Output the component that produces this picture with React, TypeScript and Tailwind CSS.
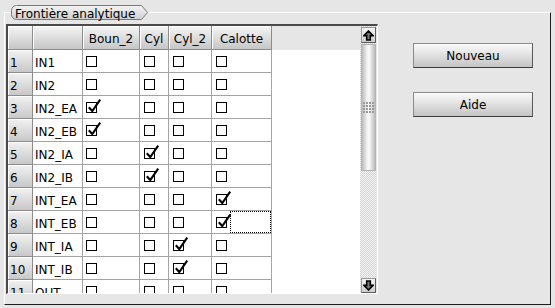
import React from "react";

type Row = [number, string, number, number, number, number];

const rows: Row[] = [
  [1, "IN1", 0, 0, 0, 0],
  [2, "IN2", 0, 0, 0, 0],
  [3, "IN2_EA", 1, 0, 0, 0],
  [4, "IN2_EB", 1, 0, 0, 0],
  [5, "IN2_IA", 0, 1, 0, 0],
  [6, "IN2_IB", 0, 1, 0, 0],
  [7, "INT_EA", 0, 0, 0, 1],
  [8, "INT_EB", 0, 0, 0, 1],
  [9, "INT_IA", 0, 0, 1, 0],
  [10, "INT_IB", 0, 0, 1, 0],
  [11, "OUT", 0, 0, 0, 0],
];

const colW = ["w-[57px]", "w-[29px]", "w-[43px]", "w-[60px]"];
const headers = ["Boun_2", "Cyl", "Cyl_2", "Calotte"];

function Check({ on }: { on: boolean }) {
  return (
    <span className="relative block w-[11px] h-[11px] border border-black bg-white">
      {on && (
        <svg
          className="absolute left-[-1px] top-[-5px] overflow-visible"
          width="17"
          height="17"
          viewBox="0 0 17 17"
        >
          <path d="M2.8 9.2 L6.3 13 L14.2 1.6" fill="none" stroke="#000" strokeWidth="2.1" />
        </svg>
      )}
    </span>
  );
}

function Arrow({ down }: { down?: boolean }) {
  return (
    <svg width="11" height="11" viewBox="0 0 11 11" className={down ? "rotate-180" : ""}>
      <path d="M5.5 1 L10 5.6 L7.3 5.6 L7.3 10 L3.7 10 L3.7 5.6 L1 5.6 Z" fill="#7a7a7a" stroke="#000" strokeWidth="1.6" strokeLinejoin="miter" />
    </svg>
  );
}

export default function App() {
  return (
    <div className="relative w-[555px] h-[308px] overflow-hidden bg-[#e6e6e6] font-['DejaVu_Sans',sans-serif] text-[12px] leading-[14px] text-black">
      {/* group legend */}
      <div className="absolute left-[11px] top-[5px] w-[138px] h-[16px]">
        <svg className="absolute inset-0" width="138" height="16" viewBox="0 0 138 16">
          <defs>
            <linearGradient id="lg" x1="0" y1="0" x2="0" y2="1">
              <stop offset="0" stopColor="#f4f4f4" />
              <stop offset="1" stopColor="#cfcfcf" />
            </linearGradient>
          </defs>
          <path
            d="M5.5 0.5 H130.5 L136.5 7.5 L130.5 14.5 H5.5 A5 5 0 0 1 0.5 9.5 V5.5 A5 5 0 0 1 5.5 0.5 Z"
            fill="url(#lg)"
            stroke="#7a7a7a"
            strokeWidth="1"
          />
        </svg>
        <span className="absolute left-[4px] top-[2px] whitespace-nowrap">Frontière analytique</span>
      </div>

      {/* group box */}
      <div className="ml-[4px] mt-[12px] w-[547px] h-[293px] border-t border-l border-white border-r border-b border-r-[#1e1e1e] border-b-[#1e1e1e] flex">
        {/* table frame */}
        <div className="ml-[1px] mt-[11px] w-[372px] h-[270px] border-t-2 border-l-2 border-t-[#4a4a4a] border-l-[#4a4a4a] border-r border-b border-r-white border-b-white flex">
          {/* viewport */}
          <div className="w-[352px] h-[267px] overflow-hidden bg-white">
            {/* header */}
            <div className="flex h-[24px] bg-[#e6e6e6]">
              <div className="w-[25px] h-[24px] border-r border-b border-[#8c8c8c] bg-linear-to-b from-[#f6f6f6] to-[#c6c6c6] shadow-[inset_1px_1px_0_#ffffff]" />
              <div className="w-[50px] h-[24px] border-r border-b border-[#8c8c8c] bg-linear-to-b from-[#f6f6f6] to-[#c6c6c6] shadow-[inset_1px_1px_0_#ffffff]" />
              {headers.map((h, i) => (
                <div
                  key={h}
                  className={`${colW[i]} h-[24px] border-r border-b border-[#8c8c8c] bg-linear-to-b from-[#f6f6f6] to-[#c6c6c6] shadow-[inset_1px_1px_0_#ffffff] flex items-center justify-center pt-[3px]`}
                >
                  {h}
                </div>
              ))}
            </div>
            {/* rows */}
            {rows.map((r) => (
              <div key={r[0]} className="flex h-[23px]">
                <div className="w-[25px] h-[23px] border-r border-b border-[#8c8c8c] bg-linear-to-b from-[#f2f2f2] to-[#c8c8c8] shadow-[inset_1px_1px_0_#ffffff] flex items-center pl-[2px] pt-[3px]">
                  {r[0]}
                </div>
                <div className="w-[50px] h-[23px] border-r border-b border-[#a4a4a4] flex items-center pl-[2px] pt-[3px] whitespace-nowrap">
                  {r[1]}
                </div>
                {[r[2], r[3], r[4], r[5]].map((v, i) => (
                  <div
                    key={i}
                    className={`${colW[i]} relative h-[23px] border-r border-b border-[#a4a4a4] flex items-center ${i === 0 ? "pl-[3px]" : "pl-[4px]"} pt-[1px]`}
                  >
                    <Check on={v === 1} />
                    {r[0] === 8 && i === 3 && (
                      <span className="absolute left-[18px] top-0 w-[41px] h-[22px] border border-dotted border-black" />
                    )}
                  </div>
                ))}
              </div>
            ))}
          </div>
          {/* scrollbar */}
          <div className="w-[17px] h-[267px] flex flex-col px-[1px] pt-[1px] bg-[repeating-conic-gradient(#d2d2d2_0_25%,#f6f6f6_0_50%)] bg-[length:2px_2px] border-r border-[#e8e8e8]">
            <div className="h-[16px] w-[15px] flex items-center justify-center border border-[#9a9a9a] border-r-[#5c5c5c] border-b-[#5c5c5c] bg-linear-to-b from-[#f4f4f4] to-[#cdcdcd]">
              <Arrow />
            </div>
            <div className="mt-[1px] h-[127px] w-[15px] flex items-center justify-center border border-[#b4b4b4] bg-[linear-gradient(to_right,#bcbcbc,#f9f9f9_45%,#f9f9f9_55%,#bcbcbc)]">
              <div className="grid grid-cols-4 gap-[1px]">
                {Array.from({ length: 16 }).map((_, k) => (
                  <span key={k} className="block w-[2px] h-[2px] bg-[#9a9a9a]" />
                ))}
              </div>
            </div>
            <div className="flex-1" />
            <div className="h-[15px] w-[15px] flex items-center justify-center border border-[#9a9a9a] border-r-[#5c5c5c] border-b-[#5c5c5c] bg-linear-to-b from-[#f4f4f4] to-[#cdcdcd]">
              <Arrow down />
            </div>
          </div>
        </div>

        {/* buttons */}
        <div className="ml-[35px] mt-[30px] flex flex-col gap-[24px]">
          <button className="w-[120px] h-[25px] border border-[#8a8a8a] border-b-[#3c3c3c] border-r-[#5a5a5a] bg-linear-to-b from-[#fbfbfb] to-[#c4c4c4] flex items-center justify-center">
            Nouveau
          </button>
          <button className="w-[120px] h-[25px] border border-[#8a8a8a] border-b-[#3c3c3c] border-r-[#5a5a5a] bg-linear-to-b from-[#fbfbfb] to-[#c4c4c4] flex items-center justify-center">
            Aide
          </button>
        </div>
      </div>
    </div>
  );
}
